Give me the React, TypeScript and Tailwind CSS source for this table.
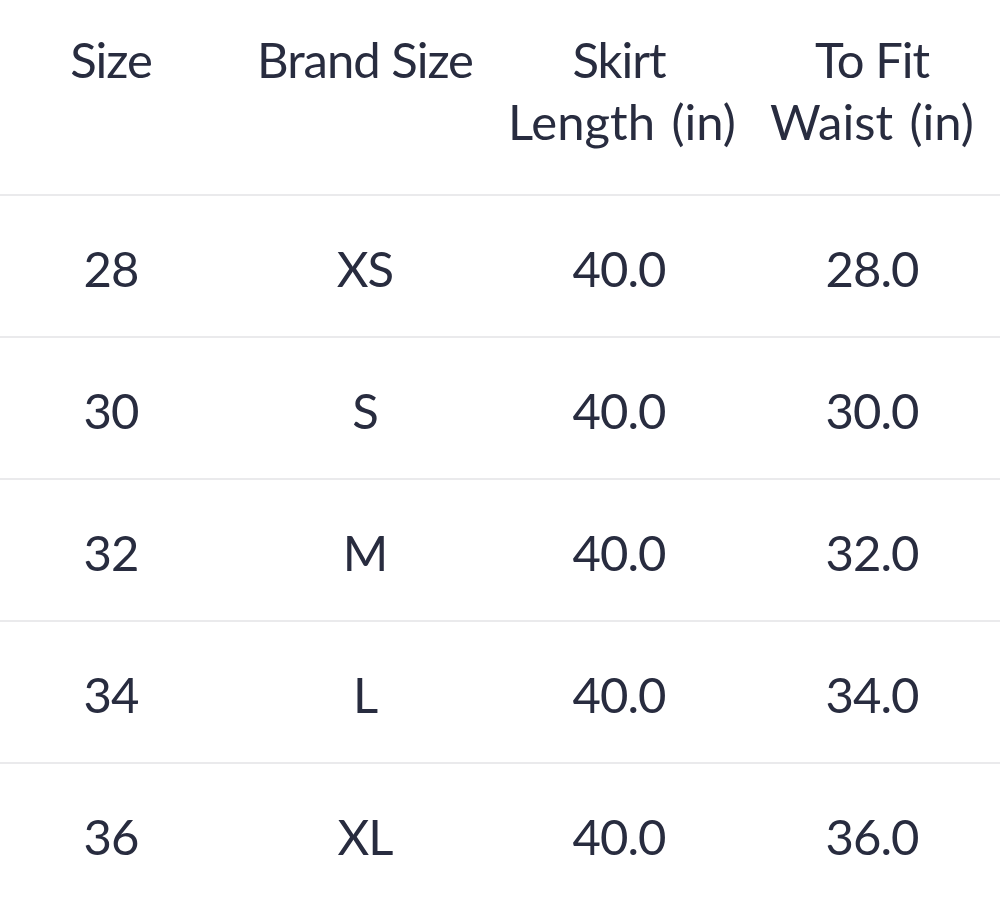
import React from "react";

const headers = [["Size"], ["Brand Size"], ["Skirt", "Length (in)"], ["To Fit", "Waist (in)"]];
const rows = [
  ["28", "XS", "40.0", "28.0"],
  ["30", "S", "40.0", "30.0"],
  ["32", "M", "40.0", "32.0"],
  ["34", "L", "40.0", "34.0"],
  ["36", "XL", "40.0", "36.0"],
];

const colCls = [
  "w-[222px]",
  "w-[286px]",
  "w-[222px]",
  "w-[270px] pl-[14px]",
];

export default function App() {
  return (
    <div
      className="w-[1000px] h-[898px] overflow-hidden bg-white text-[#282c3f]"
      style={{ fontFamily: "Lato, 'Open Sans', sans-serif" }}
    >
      <div className="flex h-[194px] border-b-2 border-[#eaeaec] box-content">
        {headers.map((h, i) => (
          <div key={i} className={`${colCls[i]} shrink-0 pt-[28px] text-center text-[49px] leading-[62px] font-normal`}>
            {h.map((l, j) => (
              <div
                key={j}
                className={j === 0 ? "whitespace-nowrap tracking-[-1px]" : "whitespace-nowrap tracking-[0px] [word-spacing:4px]"}
              >
                {l}
              </div>
            ))}
          </div>
        ))}
      </div>
      {rows.map((r, ri) => (
        <div key={ri} className="flex h-[140px] border-b-2 border-[#eaeaec] box-content">
          {r.map((c, ci) => (
            <div
              key={ci}
              className={`${colCls[ci]} shrink-0 flex items-center justify-center pt-[3px] text-[49px] leading-[62px] font-normal tracking-[-1px]`}
            >
              {c}
            </div>
          ))}
        </div>
      ))}
    </div>
  );
}
